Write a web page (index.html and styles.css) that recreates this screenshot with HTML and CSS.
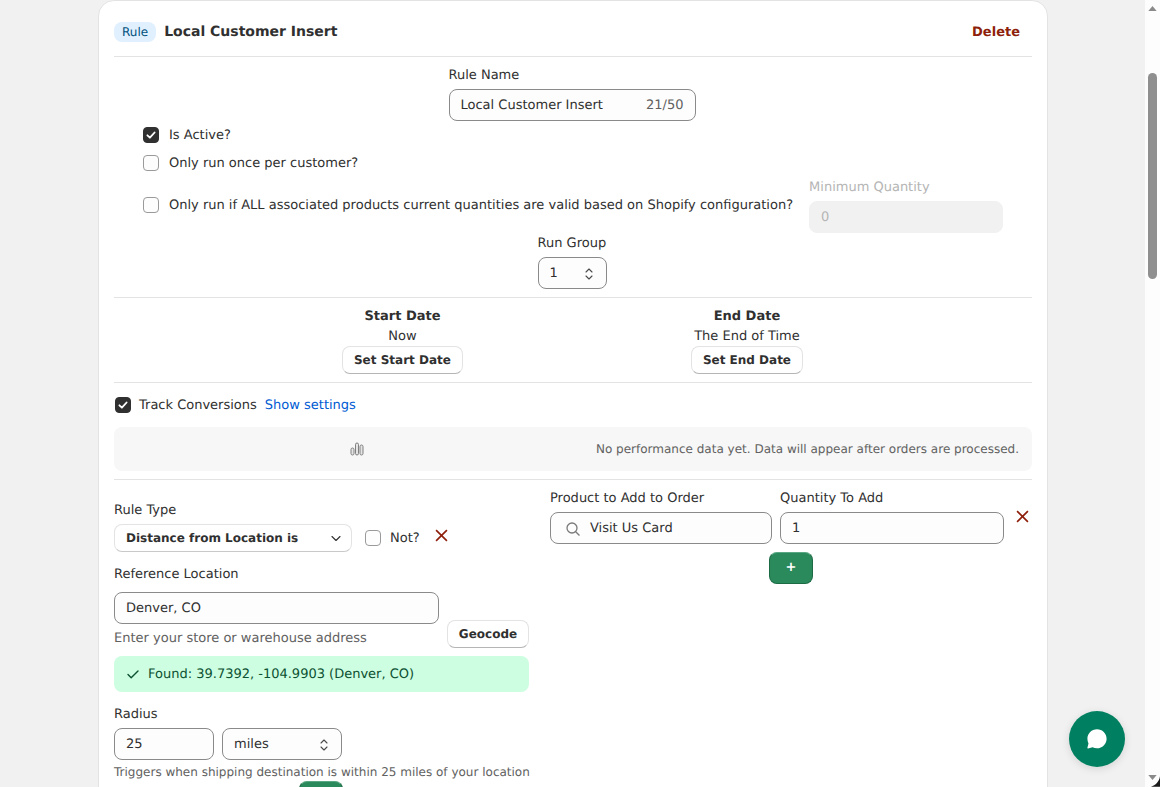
FILE: index.html
```html
<!DOCTYPE html>
<html lang="en">
<head>
<meta charset="utf-8">
<title>Local Customer Insert</title>
<link rel="stylesheet" href="styles.css">
</head>
<body>
<main class="page">
  <section class="card">
    <header class="head">
      <div class="head-title"><span class="badge">Rule</span><h2 class="title">Local Customer Insert</h2></div>
      <span class="delete txt">Delete</span>
    </header>

    <div class="center-field name-field">
      <label class="label">Rule Name</label>
      <div class="input name-input"><span>Local Customer Insert</span><span class="count">21/50</span></div>
    </div>

    <div class="checks">
      <div class="check-row"><span class="box on"><svg viewBox="0 0 16 16"><path d="M4.4 8.3l2.5 2.4 4.7-5.2" class="tick"/></svg></span><span class="txt">Is Active?</span></div>
      <div class="check-row check-row-second"><span class="box"></span><span class="txt">Only run once per customer?</span></div>
      <div class="check-row check-row-wide">
        <span class="box box-wide"></span><span>Only run if ALL associated products current quantities are valid based on Shopify configuration?</span>
        <div class="min-field">
          <label class="label disabled-label">Minimum Quantity</label>
          <div class="input disabled-input">0</div>
        </div>
      </div>
    </div>

    <div class="center-field run-field">
      <label class="label">Run Group</label>
      <div class="input run-input"><span>1</span><svg class="updown" viewBox="0 0 12 16"><path d="M3 6l3-3 3 3M3 10l3 3 3-3"/></svg></div>
    </div>

    <div class="dates">
      <div class="date"><strong>Start Date</strong><span class="date-value">Now</span><button class="btn">Set Start Date</button></div>
      <div class="date"><strong>End Date</strong><span class="date-value">The End of Time</span><button class="btn">Set End Date</button></div>
    </div>

    <div class="track">
      <span class="box on"><svg viewBox="0 0 16 16"><path d="M4.4 8.3l2.5 2.4 4.7-5.2" class="tick"/></svg></span>
      <span class="txt">Track Conversions</span><a class="link txt">Show settings</a>
    </div>

    <div class="perf">
      <div class="perf-icon"><svg width="14" height="14" viewBox="0 0 14 14"><rect x="1" y="6" width="3" height="7" rx="1.5"/><rect x="5.500" y="1" width="3" height="12" rx="1.5"/><rect x="10" y="3" width="3" height="10" rx="1.5"/></svg></div>
      <span>No performance data yet. Data will appear after orders are processed.</span>
    </div>

    <div class="lower">
      <div class="rule-col">
        <label class="label rule-type-label">Rule Type</label>
        <div class="type-row">
          <div class="select-btn"><strong>Distance from Location is</strong><svg class="chev" viewBox="0 0 12 12"><path d="M2 4.500l4 4 4-4"/></svg></div>
          <span class="box"></span><span class="not txt">Not?</span>
          <svg class="x type-x" viewBox="0 0 12 12"><path d="M1 1l10 10M11 1L1 11"/></svg>
        </div>
        <label class="label ref-label">Reference Location</label>
        <div class="geo-row">
          <div class="geo-main">
            <div class="input">Denver, CO</div>
            <p class="help">Enter your store or warehouse address</p>
          </div>
          <button class="btn geo-btn">Geocode</button>
        </div>
        <div class="found"><svg class="found-tick" viewBox="0 0 14 14"><path d="M2 7.500l3.200 3.200L12 4"/></svg><span class="txt">Found: 39.7392, -104.9903 (Denver, CO)</span></div>
        <label class="label radius-label">Radius</label>
        <div class="radius-row">
          <div class="input radius-input">25</div>
          <div class="input unit-input"><span>miles</span><svg class="updown" viewBox="0 0 12 16"><path d="M3 6l3-3 3 3M3 10l3 3 3-3"/></svg></div>
        </div>
        <p class="help radius-help">Triggers when shipping destination is within 25 miles of your location</p>
        <div class="add-wrap-left"><button class="add">+</button></div>
      </div>

      <div class="product-col">
        <div class="product-row">
          <div class="product-field">
            <label class="label">Product to Add to Order</label>
            <div class="input search-input"><svg class="search" viewBox="0 0 16 16"><circle cx="7" cy="7" r="5"/><path d="M10.700 10.700l3.800 3.800"/></svg><span>Visit Us Card</span></div>
          </div>
          <div class="qty-field">
            <label class="label">Quantity To Add</label>
            <div class="input">1</div>
          </div>
          <svg class="x product-x" viewBox="0 0 12 12"><path d="M1 1l10 10M11 1L1 11"/></svg>
        </div>
        <div class="add-wrap-right"><button class="add">+</button></div>
      </div>
    </div>
  </section>
</main>

<aside class="scrollbar">
  <svg class="arrow-up" viewBox="0 0 10 6"><path d="M5 0l5 6H0z"/></svg>
  <div class="thumb"></div>
  <svg class="arrow-down" viewBox="0 0 10 6"><path d="M0 0h10L5 6z"/></svg>
  <svg class="corner" viewBox="0 0 12 14"><path d="M12 0v14H0C6 12 11 7 12 0z"/></svg>
</aside>

<div class="chat"><svg viewBox="0 0 24 24"><path d="M12 2.200c5.300 0 9.600 4.200 9.600 9.500s-4.300 9.600-9.600 9.600c-1.600 0-3.100-.4-4.400-1.100l-4.500 1.300c-.5.100-.8-.3-.7-.7l1.100-4.300C2.900 15 2.400 13.400 2.400 11.700 2.400 6.400 6.700 2.200 12 2.200z"/></svg></div>
</body>
</html>
```
FILE: styles.css
```css
* { box-sizing: border-box; }
html, body { margin: 0; height: 787px; overflow: hidden; }
body {
  background: #f1f1f1;
  color: #303030;
  font: 13px/16px "DejaVu Sans", sans-serif;
  text-rendering: geometricPrecision;
}
button { font: inherit; text-rendering: inherit; }
.txt { padding-top: 2px; }
.page { width: 1145px; padding-left: 98px; }
.card {
  width: 950px;
  height: 900px;
  background: #fff;
  border: 1px solid #e3e3e3;
  border-radius: 16px;
  padding: 0 15px;
}
.head {
  height: 56px;
  display: flex;
  align-items: center;
  justify-content: space-between;
  border-bottom: 1px solid #e3e3e3;
  padding: 6px 12px 0 0;
  margin-bottom: 10px;
}
.head-title { display: flex; align-items: center; gap: 8px; }
.badge {
  background: #e0f0ff;
  color: #00527c;
  font-size: 12px;
  line-height: 20px;
  padding: 0 8px;
  border-radius: 8px;
}
.title { margin: 0; font-size: 14px; font-weight: 700; line-height: 20px; }
.delete { color: #8e1f0b; font-weight: 700; }
.label { display: block; color: #303030; padding-top: 1px; margin-bottom: 5px; }
.center-field { display: flex; flex-direction: column; align-items: center; }
.center-field .label { align-self: flex-start; }
.name-field { width: 247px; margin-left: 334.500px; }
.input {
  height: 32px;
  display: flex;
  align-items: center;
  justify-content: space-between;
  width: 100%;
  padding: 2px 11px 0;
  background: #fdfdfd;
  border: 1px solid #8a8a8a;
  border-radius: 8px;
}
.count { color: #616161; }
.checks { padding-left: 29px; margin-top: 6px; }
.check-row { display: flex; align-items: center; gap: 10px; height: 16px; margin-bottom: 12px; }
.check-row-second { margin-bottom: 7px; }
.check-row-wide { height: 55px; margin-bottom: 0; }
.box-wide { margin-bottom: 1px; }
.min-field { width: 194px; margin-left: 6px; padding-top: 1px; }
.disabled-label { color: #b5b5b5; }
.disabled-input { background: #f1f1f1; border-color: #f1f1f1; color: #b5b5b5; }
.box {
  flex: none;
  width: 16px;
  height: 16px;
  background: #fdfdfd;
  border: 1px solid #9a9a9a;
  border-radius: 4px;
}
.box.on { background: #303030; border-color: #303030; }
.box svg { display: block; width: 16px; height: 16px; margin: -1px; }
.tick { fill: none; stroke: #fff; stroke-width: 1.8; stroke-linecap: round; stroke-linejoin: round; }
.run-field { width: 69px; margin: 2px 0 0 423.500px; }
.run-input { width: 69px; }
.updown { width: 12px; height: 16px; fill: none; stroke: #4a4a4a; stroke-width: 1.1; stroke-linecap: round; stroke-linejoin: round; }
.dates {
  display: flex;
  justify-content: space-evenly;
  margin-top: 8px;
  padding: 10px 1px 8px 0;
  border-top: 1px solid #e3e3e3;
  border-bottom: 1px solid #e3e3e3;
}
.date { display: flex; flex-direction: column; align-items: center; }
.date strong { line-height: 18px; }
.date-value { line-height: 18px; margin: 2px 0 0; }
.btn {
  height: 28px;
  padding: 0 11px;
  background: #fff;
  color: #303030;
  font-size: 12px;
  font-weight: 700;
  border: 1px solid #e3e3e3;
  border-bottom-color: #b5b5b5;
  border-radius: 8px;
}
.track { display: flex; align-items: center; height: 44px; padding-left: 1px; }
.track .box { margin-right: 8px; }
.link { color: #005bd3; margin-left: 8px; }
.perf {
  display: flex;
  align-items: center;
  gap: 10px;
  height: 44px;
  padding: 0 13px;
  background: #f7f7f7;
  border-radius: 8px;
  color: #616161;
  font-size: 12px;
}
.perf-icon { flex: 1; display: flex; justify-content: center; padding-left: 2px; }
.perf-icon svg { fill: #e4e4e4; stroke: #808080; stroke-width: 1; }
.lower {
  display: flex;
  gap: 21px;
  margin-top: 8px;
  border-top: 1px solid #e3e3e3;
}
.rule-col { width: 415px; flex: none; }
.rule-type-label { margin: 22px 0 5px; }
.type-row { display: flex; align-items: center; height: 28px; }
.select-btn {
  width: 238px;
  height: 28px;
  display: flex;
  align-items: center;
  justify-content: space-between;
  padding: 0 9px 0 11px;
  background: #fff;
  border: 1px solid #e3e3e3;
  border-bottom-color: #c9c9c9;
  border-radius: 8px;
  margin-right: 13px;
}
.select-btn strong { font-size: 12px; }
.chev { width: 12px; height: 12px; fill: none; stroke: #303030; stroke-width: 1.1; stroke-linecap: round; stroke-linejoin: round; }
.not { margin-left: 9px; }
.x { width: 13px; height: 13px; fill: none; stroke: #8e1f0b; stroke-width: 1.5; }
.type-x { margin: -5px 0 0 15px; }
.ref-label { margin: 14px 0 9px; }
.geo-row { display: flex; gap: 8px; align-items: flex-end; }
.geo-main { width: 325px; }
.help { margin: 7px 0 0; color: #616161; }
.geo-btn { width: 82px; margin-bottom: -1px; padding: 0; }
.found {
  display: flex;
  align-items: center;
  gap: 8px;
  height: 36px;
  margin-top: 9px;
  padding: 0 12px;
  background: #cdfee1;
  border-radius: 8px;
  color: #0c5132;
}
.found-tick { width: 14px; height: 14px; fill: none; stroke: #0c5132; stroke-width: 1.4; stroke-linecap: round; stroke-linejoin: round; }
.radius-label { margin: 14px 0 5px; }
.radius-row { display: flex; gap: 8px; }
.radius-input { width: 100px; }
.unit-input { width: 120px; }
.radius-help { margin-top: 4px; font-size: 12px; white-space: nowrap; color: #616161; }
.add-wrap-left { margin: 1px 0 0 185px; }
.add {
  width: 44px;
  height: 32px;
  padding: 0;
  background: #2b8a5c;
  color: #fff;
  font-weight: 700;
  border: 1px solid #1c6b45;
  border-top-color: #5aa883;
  border-radius: 8px;
}
.product-col { flex: 1; }
.product-row { display: flex; margin-top: 10px; }
.product-field { width: 222px; margin-right: 8px; }
.qty-field { width: 224px; }
.search-input { justify-content: flex-start; padding-left: 14px; }
.search { width: 16px; height: 16px; fill: none; stroke: #7a7a7a; stroke-width: 1.3; margin-right: 9px; flex: none; }
.product-x { margin: 20px 0 0 12px; }
.add-wrap-right { margin: 8px 0 0 219px; }
.scrollbar {
  position: fixed;
  top: 0;
  right: 0;
  width: 15px;
  height: 787px;
  background: #fdfdfd;
}
.thumb {
  position: absolute;
  top: 73px;
  left: 3px;
  width: 9px;
  height: 206px;
  background: #8f8f8f;
  border-radius: 5px;
}
.arrow-up, .arrow-down { position: absolute; left: 3px; width: 9px; height: 5px; fill: #8a8a8a; }
.arrow-up { top: 6px; }
.arrow-down { top: 775px; }
.corner { position: absolute; right: 0; bottom: 0; width: 9px; height: 11px; fill: #1a1a1a; }
.chat {
  position: fixed;
  left: 1069px;
  top: 711px;
  width: 56px;
  height: 56px;
  display: flex;
  align-items: center;
  justify-content: center;
  background: #008060;
  border-radius: 50%;
  box-shadow: 0 2px 8px rgba(0,0,0,.12);
}
.chat svg { width: 24px; height: 24px; fill: #fff; }
```
